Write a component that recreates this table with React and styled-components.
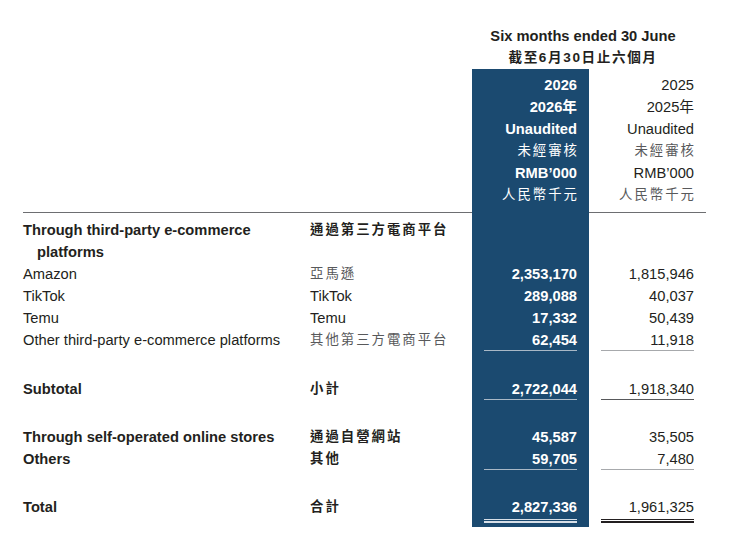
import React from "react";
import styled, { createGlobalStyle } from "styled-components";

//Global=====================================================
const GlobalStyle = createGlobalStyle`
  body {
    margin: 0;
    background: #ffffff;
    font-family: "Liberation Sans", Arial, "Noto Sans CJK TC", sans-serif;
    color: #231f20;
  }
`;

//Styled Components==========================================
const BLUE = "#1b4a70";

const Page = styled.div`
  width: 756px;
  height: 543px;
  padding: 25px 0 0 23px;
  box-sizing: border-box;
`;

const Table = styled.div`
  display: grid;
  grid-template-columns: 287px 162px 117px 117px;
  font-size: 14.7px;
`;

const Title = styled.div`
  grid-column: 3 / 5;
  padding-right: 12px;
  text-align: center;
  font-weight: bold;
  line-height: 22px;
  font-size: ${p => (p.$zh ? "13.6px" : "14.7px")};
  letter-spacing: ${p => (p.$zh ? "1.6px" : "0")};
`;

const Cell = styled.div`
  height: ${p => p.$h || 22}px;
  line-height: 22px;
  white-space: nowrap;
  box-sizing: border-box;
  font-weight: ${p => (p.$bold ? "bold" : "normal")};
  padding-left: ${p => (p.$indent ? "14px" : "0")};
  color: ${p => (p.$zh && !p.$bold ? "#58595b" : "#231f20")};
  font-size: ${p => (p.$zh ? "13.4px" : "inherit")};
  letter-spacing: ${p => (p.$zh ? "2px" : "0")};
  border-bottom: ${p => (p.$rule ? "1px solid #6d6e71" : "none")};
`;

const Num = styled.div`
  height: ${p => p.$h || 22}px;
  line-height: 22px;
  padding: 0 ${p => (p.$zh ? 10 : 12)}px 0 12px;
  box-sizing: border-box;
  text-align: right;
  white-space: nowrap;
  background: ${p => (p.$blue ? BLUE : "transparent")};
  color: ${p => (p.$blue ? "#ffffff" : p.$zh ? "#58595b" : "#231f20")};
  font-weight: ${p => (p.$blue && !p.$zh ? "bold" : "normal")};
  font-size: ${p => (p.$zh ? "13.4px" : "inherit")};
  letter-spacing: ${p => (p.$zh ? "2px" : "0")};
  border-bottom: ${p => (p.$rule && !p.$blue ? "1px solid #6d6e71" : "none")};
`;

const Figure = styled.span`
  display: block;
  height: 22px;
  box-sizing: border-box;
  border-bottom: ${p =>
    p.$line === "single"
      ? `1px solid ${p.$blue ? "#a9b8c6" : p.$light ? "#a7a9ac" : "#58595b"}`
      : "none"};
`;

const Double = styled.span`
  display: block;
  height: 4px;
  margin-top: 1px;
  border-top: 1px solid ${p => (p.$blue ? "#d8e0e8" : "#231f20")};
  border-bottom: 2px solid ${p => (p.$blue ? "#d8e0e8" : "#231f20")};
  box-sizing: border-box;
`;

//Data========================================================
const header = [
  ["2026", "2025", false],
  ["2026年", "2025年", false],
  ["Unaudited", "Unaudited", false],
  ["未經審核", "未經審核", true],
  ["RMB’000", "RMB’000", false],
  ["人民幣千元", "人民幣千元", true]
];

const rows = [
  { en: "Through third-party e-commerce", zh: "通過第三方電商平台", bold: true },
  { en: "platforms", bold: true, indent: true },
  { en: "Amazon", zh: "亞馬遜", a: "2,353,170", b: "1,815,946" },
  { en: "TikTok", zh: "TikTok", a: "289,088", b: "40,037", latinZh: true },
  { en: "Temu", zh: "Temu", a: "17,332", b: "50,439", latinZh: true },
  {
    en: "Other third-party e-commerce platforms",
    zh: "其他第三方電商平台",
    a: "62,454",
    b: "11,918",
    line: "single",
    light: true
  },
  { spacer: 27 },
  { en: "Subtotal", zh: "小計", a: "2,722,044", b: "1,918,340", bold: true, line: "single" },
  { spacer: 26 },
  { en: "Through self-operated online stores", zh: "通過自營網站", a: "45,587", b: "35,505", bold: true },
  { en: "Others", zh: "其他", a: "59,705", b: "7,480", bold: true, line: "single", light: true },
  { spacer: 26 },
  { en: "Total", zh: "合計", a: "2,827,336", b: "1,961,325", bold: true, line: "double" }
];

//Component===================================================
const App = () => {
  return (
    <Page>
      <GlobalStyle />
      <Table>
        <Cell />
        <Cell />
        <Title>Six months ended 30 June</Title>
        <Cell />
        <Cell />
        <Title $zh>截至6月30日止六個月</Title>

        <Cell $h={5} />
        <Cell $h={5} />
        <Num $blue $h={5} />
        <Num $h={5} />

        {header.map(([a, b, zh], i) => (
          <React.Fragment key={i}>
            <Cell />
            <Cell />
            <Num $blue $zh={zh}>
              {a}
            </Num>
            <Num $zh={zh}>{b}</Num>
          </React.Fragment>
        ))}

        <Cell $h={7} $rule />
        <Cell $h={7} $rule />
        <Num $blue $h={7} />
        <Num $h={7} $rule />

        <Cell $h={6} />
        <Cell $h={6} />
        <Num $blue $h={6} />
        <Num $h={6} />

        {rows.map((r, i) =>
          r.spacer ? (
            <React.Fragment key={i}>
              <Cell $h={r.spacer} />
              <Cell $h={r.spacer} />
              <Num $blue $h={r.spacer} />
              <Num $h={r.spacer} />
            </React.Fragment>
          ) : (
            <React.Fragment key={i}>
              <Cell $bold={r.bold} $indent={r.indent}>
                {r.en}
              </Cell>
              <Cell $bold={r.bold} $zh={r.zh && !r.latinZh}>
                {r.zh}
              </Cell>
              <Num $blue $h={r.line === "double" ? 31 : 22}>
                <Figure $blue $line={r.line}>
                  {r.a}
                </Figure>
                {r.line === "double" && <Double $blue />}
              </Num>
              <Num $h={r.line === "double" ? 31 : 22}>
                <Figure $line={r.line} $light={r.light}>
                  {r.b}
                </Figure>
                {r.line === "double" && <Double />}
              </Num>
            </React.Fragment>
          )
        )}
      </Table>
    </Page>
  );
};

export default App;
